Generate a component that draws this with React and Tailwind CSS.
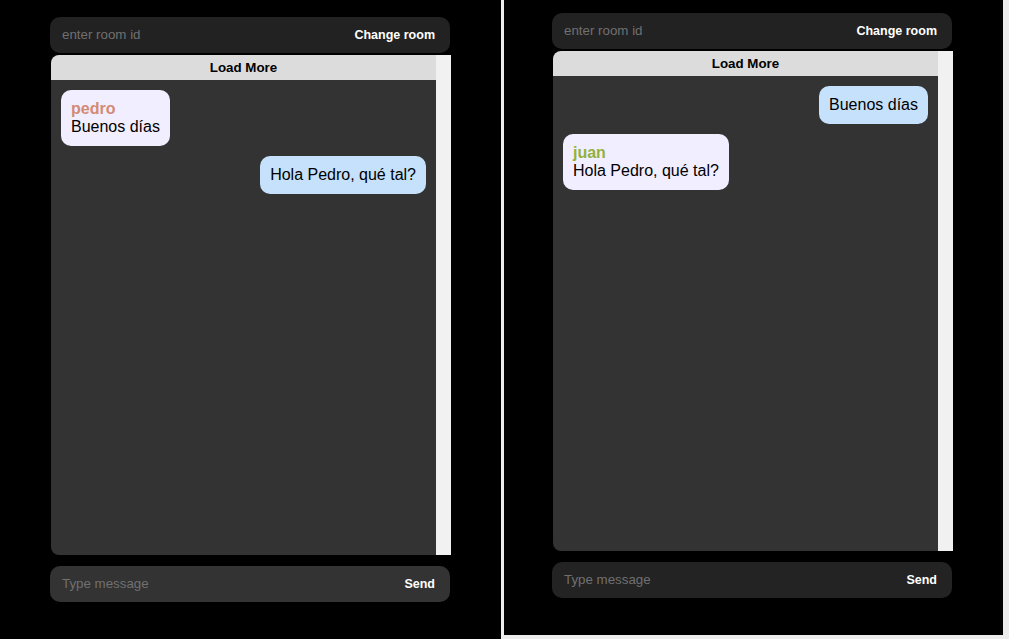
const rooms = [
  {
    id: "left",
    pad: "pl-[50px] pt-[17px]",
    panel: "w-[501px] h-[639px]",
    sendBg: "bg-[#333333]",
    messages: [
      { from: "pedro", text: "Buenos días", mine: false, color: "text-[#d38b75]" },
      { from: "juan", text: "Hola Pedro, qué tal?", mine: true },
    ],
  },
  {
    id: "right",
    pad: "pl-[48px] pt-[13px]",
    panel: "w-[499px] h-[635px]",
    sendBg: "bg-[#232323]",
    messages: [
      { from: "pedro", text: "Buenos días", mine: true },
      { from: "juan", text: "Hola Pedro, qué tal?", mine: false, color: "text-[#93b13b]" },
    ],
  },
];

function Bubble({ msg }) {
  if (msg.mine) {
    return (
      <div className="flex justify-end">
        <div className="rounded-[10px] bg-[#c5e1fb] px-[10px] py-[10px] text-[16px] leading-[18px] text-black">
          {msg.text}
        </div>
      </div>
    );
  }

  return (
    <div className="flex justify-start">
      <div className="rounded-[10px] bg-[#f1eeff] px-[10px] py-[10px] text-[16px] leading-[18px] text-black">
        <div className={`font-bold ${msg.color}`}>{msg.from}</div>
        <div>{msg.text}</div>
      </div>
    </div>
  );
}

function Room({ room }) {
  return (
    <div className={`${room.panel} ${room.pad} shrink-0 bg-black`}>
      <div className="flex w-[400px] flex-col">
        <div className="flex h-[36px] items-center justify-between rounded-[10px] bg-[#222222] pl-[12px] pr-[15px]">
          <input
            className="w-[200px] bg-transparent text-[13.33px] text-white outline-none placeholder:text-[#707070]"
            placeholder="enter room id"
          />
          <button className="text-[12.5px] font-bold text-white" type="button">
            Change room
          </button>
        </div>

        <div className="ml-px mt-[2px] flex h-[500px] w-[400px]">
          <div className="flex w-[385px] flex-col overflow-hidden rounded-l-[8px]">
            <div className="flex h-[25px] shrink-0 items-center justify-center bg-[#dcdcdc] text-[13.33px] font-bold text-black">
              Load More
            </div>
            <div className="flex flex-1 flex-col gap-[10px] bg-[#333333] p-[10px]">
              {room.messages.map((msg, i) => (
                <Bubble key={i} msg={msg} />
              ))}
            </div>
          </div>
          <div className="w-[15px] bg-[#f1f1f1]" />
        </div>

        <div
          className={`mt-[11px] flex h-[36px] items-center justify-between rounded-[10px] ${room.sendBg} pl-[12px] pr-[15px]`}
        >
          <input
            className="w-[250px] bg-transparent text-[13.33px] text-white outline-none placeholder:text-[#707070]"
            placeholder="Type message"
          />
          <button className="text-[12.5px] font-bold text-white" type="button">
            Send
          </button>
        </div>
      </div>
    </div>
  );
}

export default function App() {
  return (
    <div
      className="flex h-[639px] w-[1009px] items-start gap-[3px] overflow-hidden bg-[#ececec]"
      style={{ fontFamily: '"Liberation Sans", Arial, sans-serif' }}
    >
      {rooms.map((room) => (
        <Room key={room.id} room={room} />
      ))}
    </div>
  );
}
